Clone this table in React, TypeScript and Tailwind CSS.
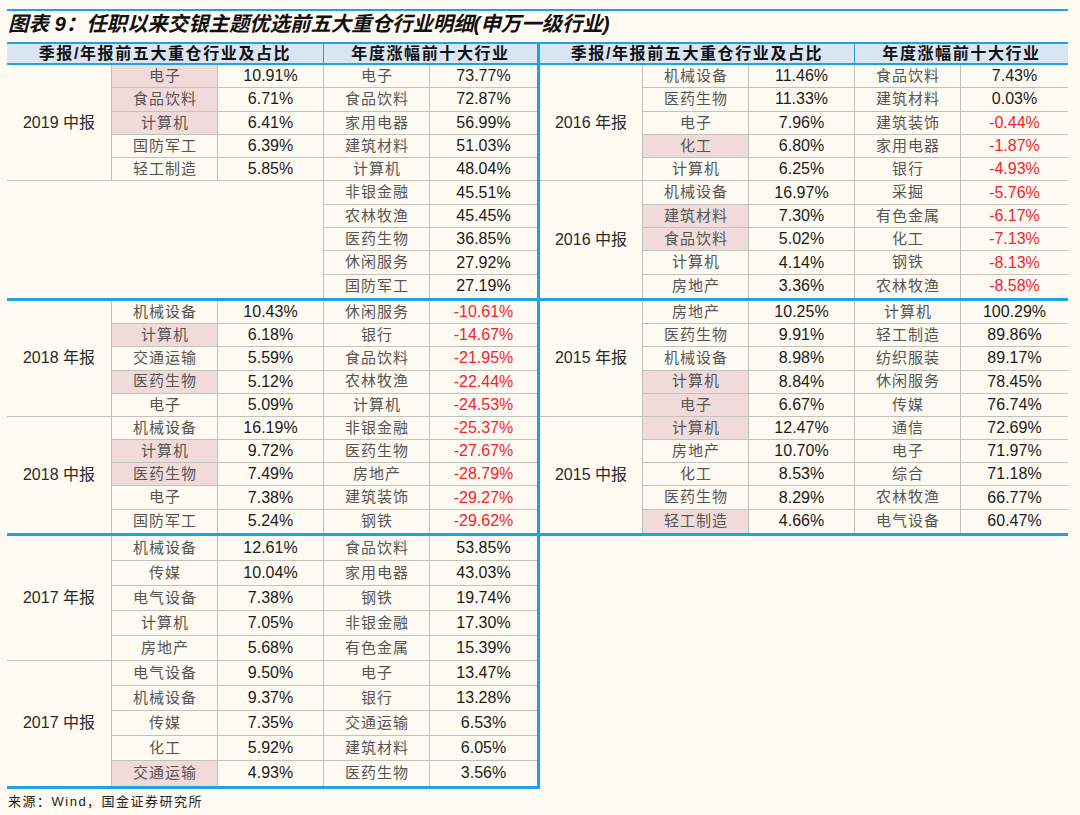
import React from "react";

type Holding = { n: string; p: string; pink?: boolean };
type Group = { label: string; items: Holding[] };
type Top = { n: string; p: string };

const A_LEFT_GROUPS: Group[] = [
  {
    label: "2019 中报",
    items: [
      { n: "电子", p: "10.91%", pink: true },
      { n: "食品饮料", p: "6.71%", pink: true },
      { n: "计算机", p: "6.41%", pink: true },
      { n: "国防军工", p: "6.39%" },
      { n: "轻工制造", p: "5.85%" },
    ],
  },
];
const A_LEFT_TOPS: Top[] = [
  { n: "电子", p: "73.77%" },
  { n: "食品饮料", p: "72.87%" },
  { n: "家用电器", p: "56.99%" },
  { n: "建筑材料", p: "51.03%" },
  { n: "计算机", p: "48.04%" },
  { n: "非银金融", p: "45.51%" },
  { n: "农林牧渔", p: "45.45%" },
  { n: "医药生物", p: "36.85%" },
  { n: "休闲服务", p: "27.92%" },
  { n: "国防军工", p: "27.19%" },
];

const B_LEFT_GROUPS: Group[] = [
  {
    label: "2018 年报",
    items: [
      { n: "机械设备", p: "10.43%" },
      { n: "计算机", p: "6.18%", pink: true },
      { n: "交通运输", p: "5.59%" },
      { n: "医药生物", p: "5.12%", pink: true },
      { n: "电子", p: "5.09%" },
    ],
  },
  {
    label: "2018 中报",
    items: [
      { n: "机械设备", p: "16.19%" },
      { n: "计算机", p: "9.72%", pink: true },
      { n: "医药生物", p: "7.49%", pink: true },
      { n: "电子", p: "7.38%" },
      { n: "国防军工", p: "5.24%" },
    ],
  },
];
const B_LEFT_TOPS: Top[] = [
  { n: "休闲服务", p: "-10.61%" },
  { n: "银行", p: "-14.67%" },
  { n: "食品饮料", p: "-21.95%" },
  { n: "农林牧渔", p: "-22.44%" },
  { n: "计算机", p: "-24.53%" },
  { n: "非银金融", p: "-25.37%" },
  { n: "医药生物", p: "-27.67%" },
  { n: "房地产", p: "-28.79%" },
  { n: "建筑装饰", p: "-29.27%" },
  { n: "钢铁", p: "-29.62%" },
];

const C_LEFT_GROUPS: Group[] = [
  {
    label: "2017 年报",
    items: [
      { n: "机械设备", p: "12.61%" },
      { n: "传媒", p: "10.04%" },
      { n: "电气设备", p: "7.38%" },
      { n: "计算机", p: "7.05%" },
      { n: "房地产", p: "5.68%" },
    ],
  },
  {
    label: "2017 中报",
    items: [
      { n: "电气设备", p: "9.50%" },
      { n: "机械设备", p: "9.37%" },
      { n: "传媒", p: "7.35%" },
      { n: "化工", p: "5.92%" },
      { n: "交通运输", p: "4.93%", pink: true },
    ],
  },
];
const C_LEFT_TOPS: Top[] = [
  { n: "食品饮料", p: "53.85%" },
  { n: "家用电器", p: "43.03%" },
  { n: "钢铁", p: "19.74%" },
  { n: "非银金融", p: "17.30%" },
  { n: "有色金属", p: "15.39%" },
  { n: "电子", p: "13.47%" },
  { n: "银行", p: "13.28%" },
  { n: "交通运输", p: "6.53%" },
  { n: "建筑材料", p: "6.05%" },
  { n: "医药生物", p: "3.56%" },
];

const A_RIGHT_GROUPS: Group[] = [
  {
    label: "2016 年报",
    items: [
      { n: "机械设备", p: "11.46%" },
      { n: "医药生物", p: "11.33%" },
      { n: "电子", p: "7.96%" },
      { n: "化工", p: "6.80%", pink: true },
      { n: "计算机", p: "6.25%" },
    ],
  },
  {
    label: "2016 中报",
    items: [
      { n: "机械设备", p: "16.97%" },
      { n: "建筑材料", p: "7.30%", pink: true },
      { n: "食品饮料", p: "5.02%", pink: true },
      { n: "计算机", p: "4.14%" },
      { n: "房地产", p: "3.36%" },
    ],
  },
];
const A_RIGHT_TOPS: Top[] = [
  { n: "食品饮料", p: "7.43%" },
  { n: "建筑材料", p: "0.03%" },
  { n: "建筑装饰", p: "-0.44%" },
  { n: "家用电器", p: "-1.87%" },
  { n: "银行", p: "-4.93%" },
  { n: "采掘", p: "-5.76%" },
  { n: "有色金属", p: "-6.17%" },
  { n: "化工", p: "-7.13%" },
  { n: "钢铁", p: "-8.13%" },
  { n: "农林牧渔", p: "-8.58%" },
];

const B_RIGHT_GROUPS: Group[] = [
  {
    label: "2015 年报",
    items: [
      { n: "房地产", p: "10.25%" },
      { n: "医药生物", p: "9.91%" },
      { n: "机械设备", p: "8.98%" },
      { n: "计算机", p: "8.84%", pink: true },
      { n: "电子", p: "6.67%", pink: true },
    ],
  },
  {
    label: "2015 中报",
    items: [
      { n: "计算机", p: "12.47%", pink: true },
      { n: "房地产", p: "10.70%" },
      { n: "化工", p: "8.53%" },
      { n: "医药生物", p: "8.29%" },
      { n: "轻工制造", p: "4.66%", pink: true },
    ],
  },
];
const B_RIGHT_TOPS: Top[] = [
  { n: "计算机", p: "100.29%" },
  { n: "轻工制造", p: "89.86%" },
  { n: "纺织服装", p: "89.17%" },
  { n: "休闲服务", p: "78.45%" },
  { n: "传媒", p: "76.74%" },
  { n: "通信", p: "72.69%" },
  { n: "电子", p: "71.97%" },
  { n: "综合", p: "71.18%" },
  { n: "农林牧渔", p: "66.77%" },
  { n: "电气设备", p: "60.47%" },
];

const CELL = "flex items-center justify-center border-[#c4c0bb] min-w-0";
const NAME = "text-[15px] tracking-[1px] text-[#555555] pl-[1px]";
const PCT = "text-[16px] text-[#1a1a1a]";

function Section({
  groups,
  tops,
  gridClass,
}: {
  groups: Group[];
  tops: Top[];
  gridClass: string;
}) {
  const cells: React.ReactNode[] = [];
  for (let r = 0; r < 10; r++) {
    const g = Math.floor(r / 5);
    const i = r % 5;
    const last = r === 9;
    const group = groups[g];
    if (i === 0) {
      if (group) {
        cells.push(
          <div
            key={"y" + r}
            className={
              CELL +
              " row-span-5 border-r text-[16px] text-[#2a2a2a] " +
              (g === 0 ? "border-b" : "")
            }
          >
            {group.label}
          </div>
        );
      } else {
        cells.push(
          <div key={"e" + r} className={CELL + " col-span-3 row-span-5 border-r"} />
        );
      }
    }
    if (group) {
      const it = group.items[i];
      cells.push(
        <div
          key={"n" + r}
          className={
            CELL +
            " border-r " +
            NAME +
            (last ? "" : " border-b") +
            (it.pink ? " bg-[#f1dbda]" : "")
          }
        >
          {it.n}
        </div>
      );
      cells.push(
        <div key={"p" + r} className={CELL + " border-r " + PCT + (last ? "" : " border-b")}>
          {it.p}
        </div>
      );
    }
    const t = tops[r];
    cells.push(
      <div key={"tn" + r} className={CELL + " border-r " + NAME + (last ? "" : " border-b")}>
        {t.n}
      </div>
    );
    cells.push(
      <div
        key={"tp" + r}
        className={
          CELL +
          " text-[16px] " +
          (t.p.startsWith("-") ? "text-[#f5222d]" : "text-[#1a1a1a]") +
          (last ? "" : " border-b")
        }
      >
        {t.p}
      </div>
    );
  }
  return <div className={"grid " + gridClass}>{cells}</div>;
}

const Sep = () => <div className="h-[3px] bg-[#1ba3e3]" />;

export default function App() {
  return (
    <div className="w-[1080px] h-[815px] bg-[#fffbf2] pt-[9px] pl-[7px] font-['Liberation_Sans','Noto_Sans_CJK_SC',sans-serif] overflow-hidden">
      <div className="w-[1061px]">
        <div className="h-[2px] bg-[#1ba3e3]" />
        <div className="h-[31px] flex items-center pb-[4px] pl-[1px] text-[20.4px] font-bold italic text-[#111] leading-none">
          图表 9：任职以来交银主题优选前五大重仓行业明细(申万一级行业)
        </div>
        <div className="flex h-[23px]">
          <div className="w-[530px] flex border-t-2 border-b-2 border-[#1ba3e3] bg-[#d9e5f3] text-[16px] font-bold tracking-[1.6px] text-[#111]">
            <div className="w-[317px] border-r border-[#1ba3e3] flex items-center justify-center">
              季报/年报前五大重仓行业及占比
            </div>
            <div className="flex-1 flex items-center justify-center">年度涨幅前十大行业</div>
          </div>
          <div className="w-[3px] bg-[#1ba3e3]" />
          <div className="w-[528px] flex border-t-2 border-b-2 border-[#1ba3e3] bg-[#d9e5f3] text-[16px] font-bold tracking-[1.6px] text-[#111]">
            <div className="w-[315px] border-r border-[#1ba3e3] flex items-center justify-center">
              季报/年报前五大重仓行业及占比
            </div>
            <div className="flex-1 flex items-center justify-center">年度涨幅前十大行业</div>
          </div>
        </div>
        <div className="flex">
          <div className="w-[530px] flex flex-col">
            <Section
              groups={A_LEFT_GROUPS}
              tops={A_LEFT_TOPS}
              gridClass="grid-cols-[105px_106px_106px_106px_107px] grid-rows-[repeat(10,23.3px)]"
            />
            <Sep />
            <Section
              groups={B_LEFT_GROUPS}
              tops={B_LEFT_TOPS}
              gridClass="grid-cols-[105px_106px_106px_106px_107px] grid-rows-[repeat(10,23.2px)]"
            />
            <Sep />
            <Section
              groups={C_LEFT_GROUPS}
              tops={C_LEFT_TOPS}
              gridClass="grid-cols-[105px_106px_106px_106px_107px] grid-rows-[repeat(10,25px)]"
            />
            <Sep />
          </div>
          <div className="w-[3px] bg-[#1ba3e3]" />
          <div className="w-[528px] flex flex-col">
            <Section
              groups={A_RIGHT_GROUPS}
              tops={A_RIGHT_TOPS}
              gridClass="grid-cols-[103px_106px_106px_106px_107px] grid-rows-[repeat(10,23.3px)]"
            />
            <Sep />
            <Section
              groups={B_RIGHT_GROUPS}
              tops={B_RIGHT_TOPS}
              gridClass="grid-cols-[103px_106px_106px_106px_107px] grid-rows-[repeat(10,23.2px)]"
            />
            <Sep />
          </div>
        </div>
        <div className="h-[26px] flex items-center pl-[1px] text-[13px] tracking-[1.5px] text-[#222]">
          来源：Wind，国金证券研究所
        </div>
      </div>
    </div>
  );
}
